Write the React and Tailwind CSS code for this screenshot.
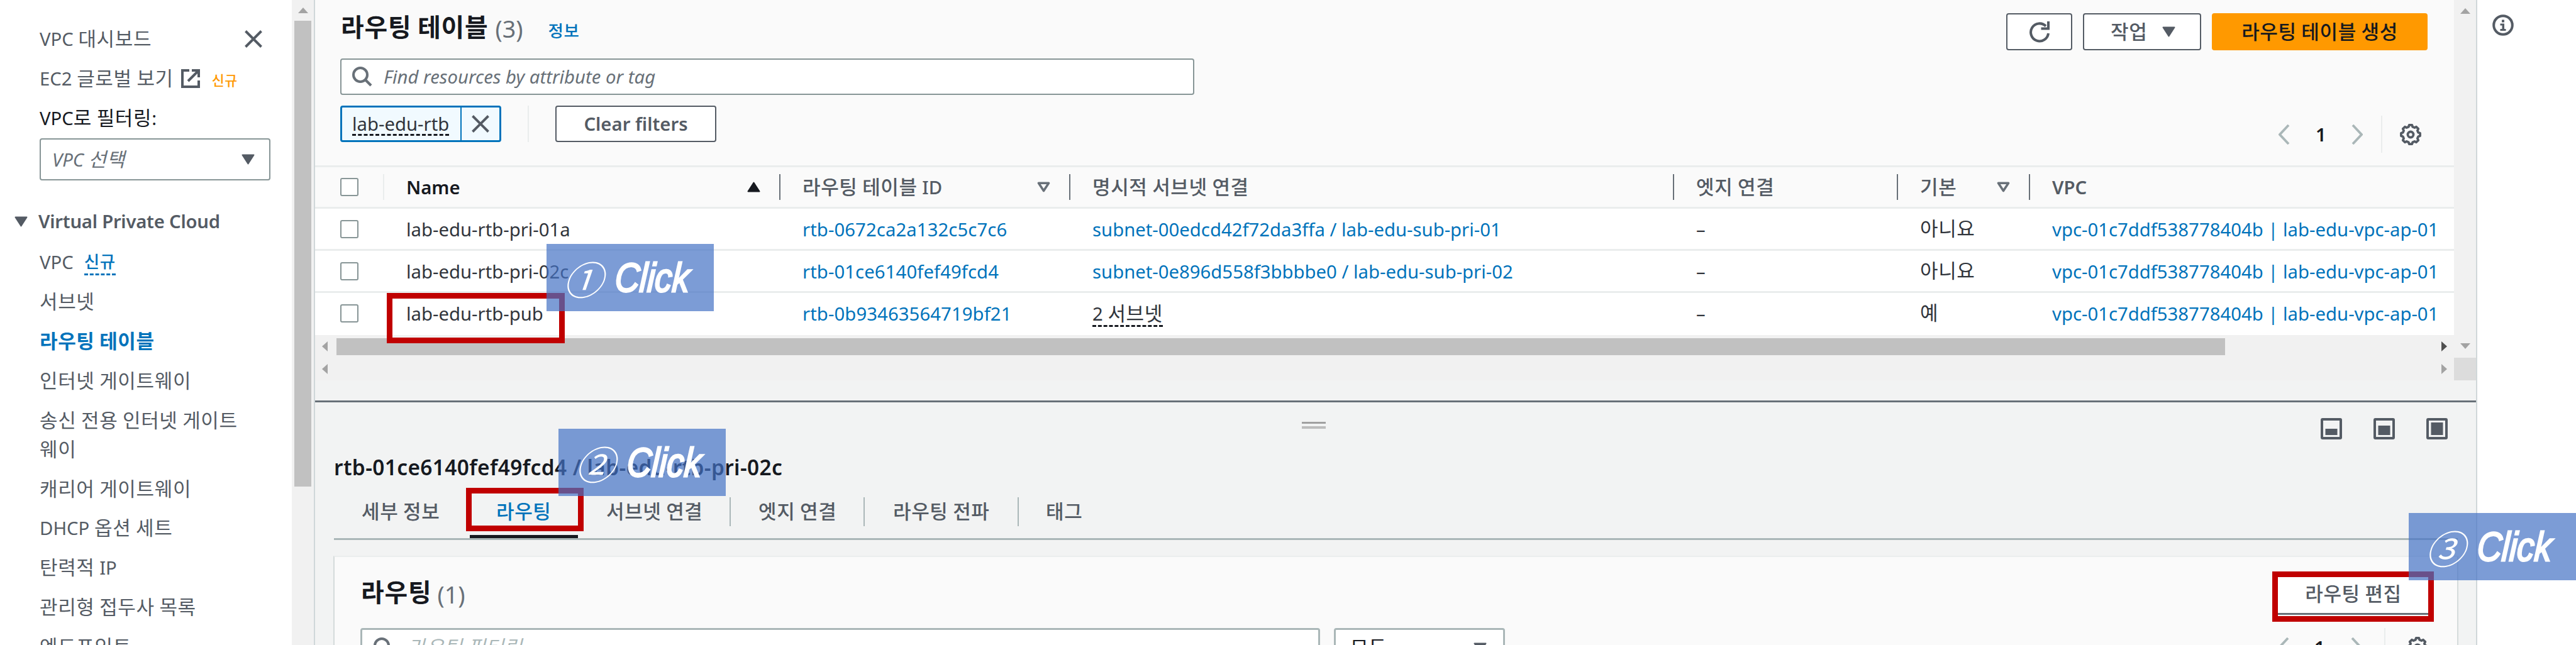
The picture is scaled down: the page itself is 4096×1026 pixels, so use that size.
import React from "react";

/* Splits a string so that Hangul runs get their own face and pitch. */
function T({ children }) {
  return String(children)
    .split(/([가-힣]+)/)
    .map((part, i) =>
      i % 2 ? (
        <span key={i} className="font-['Noto_Sans_CJK_KR',sans-serif] text-[1.06em] leading-none tracking-[0.02em]">
          {part}
        </span>
      ) : (
        part
      )
    );
}

const Down = ({ className = "", color = "#545b64" }) => (
  <svg viewBox="0 0 21 17" className={"h-[17px] w-[21px] shrink-0 " + className}>
    <path d="M1.5 1.5h18L10.5 15.5z" fill={color} stroke={color} strokeWidth="2" strokeLinejoin="round" />
  </svg>
);
const Up = ({ className = "" }) => (
  <svg viewBox="0 0 21 17" className={"h-[17px] w-[21px] shrink-0 " + className}>
    <path d="M1.5 15.5h18L10.5 1.5z" fill="#16191f" stroke="#16191f" strokeWidth="2" strokeLinejoin="round" />
  </svg>
);
const Hollow = ({ className = "" }) => (
  <svg viewBox="0 0 21 17" className={"h-[17px] w-[21px] shrink-0 " + className}>
    <path d="M2.5 2.2h16L10.5 14.6z" fill="none" stroke="#687078" strokeWidth="3.6" strokeLinejoin="round" />
  </svg>
);
const Cross = ({ className = "" }) => (
  <svg viewBox="0 0 28 28" className={"h-[28px] w-[28px] shrink-0 " + className}>
    <path d="M1.5 1.5l25 25M26.5 1.5l-25 25" stroke="#545b64" strokeWidth="4" fill="none" />
  </svg>
);
const Magnifier = ({ className = "" }) => (
  <svg viewBox="0 0 32 32" className={"h-[32px] w-[32px] shrink-0 " + className}>
    <circle cx="13" cy="13" r="11" stroke="#687078" strokeWidth="4" fill="none" />
    <path d="M20.5 20.5L30 30" stroke="#687078" strokeWidth="4.2" fill="none" />
  </svg>
);
const Chevron = ({ right, className = "" }) => (
  <svg viewBox="0 0 18 32" className={"h-[32px] w-[18px] shrink-0 " + className}>
    <path d={right ? "M2 1l14 15L2 31" : "M16 1L2 16l14 15"} stroke="#aab7b8" strokeWidth="3.8" fill="none" />
  </svg>
);

/* Eight-toothed cog outline. */
const COG = Array.from({ length: 8 }, (_, t) =>
  [[-15, 12.6], [-8.5, 15.2], [8.5, 15.2], [15, 12.6]]
    .map(([deg, r]) => {
      const a = ((t * 45 + deg) * Math.PI) / 180;
      return (18 + r * Math.sin(a)).toFixed(2) + "," + (18 - r * Math.cos(a)).toFixed(2);
    })
    .join(" ")
).join(" ");
const Gear = ({ className = "" }) => (
  <svg viewBox="0 0 36 36" className={"h-[36px] w-[36px] shrink-0 " + className}>
    <polygon points={COG} fill="none" stroke="#545b64" strokeWidth="3.8" strokeLinejoin="round" />
    <circle cx="18" cy="18" r="4.5" fill="none" stroke="#545b64" strokeWidth="3.8" />
  </svg>
);
const Tri = ({ dir, color = "#a3a3a3", className = "" }) => {
  const d = { up: "M0 12L8 3l8 9z", down: "M0 4h16L8 13z", left: "M12 0L3 8l9 8z", right: "M4 0l9 8-9 8z" }[dir];
  return (
    <svg viewBox="0 0 16 16" className={"h-[16px] w-[16px] shrink-0 " + className}>
      <path d={d} fill={color} />
    </svg>
  );
};

const Check = () => <div className="h-[29px] w-[29px] rounded-[3px] border-2 border-[#879596] bg-white" />;

const NAV = ["인터넷 게이트웨이", "송신 전용 인터넷 게이트\n웨이", "캐리어 게이트웨이", "DHCP 옵션 세트", "탄력적 IP", "관리형 접두사 목록", "엔드포인트"];

function Sidebar() {
  return (
    <aside className="flex h-full w-[499px] shrink-0 bg-white text-[#545b64]">
      <div className="flex w-[464px] shrink-0 flex-col pt-[39px] [&>*]:shrink-0">
        <div className="flex h-[46px] items-center justify-between pl-[63px] pr-[47px]">
          <span><T>VPC 대시보드</T></span>
          <Cross />
        </div>
        <div className="mt-[17px] flex h-[46px] items-center pl-[63px]">
          <span><T>EC2 글로벌 보기</T></span>
          <svg viewBox="0 0 30 30" className="ml-[12px] h-[30px] w-[30px]">
            <path d="M13 2H2v26h26V18M17 2h11v11M27 3L11 19" fill="none" stroke="#545b64" strokeWidth="4" />
          </svg>
          <span className="ml-[19px] mt-[5px] text-[20.500px] font-medium text-[#ff9900]"><T>신규</T></span>
        </div>
        <div className="mt-[17px] flex h-[46px] items-center pl-[63px] text-[#16191f]">
          <span><T>VPC로 필터링:</T></span>
        </div>
        <div className="ml-[63px] mt-[9px] flex h-[67px] w-[367px] items-center justify-between rounded-[4px] border-2 border-[#879596] bg-white pl-[18px] pr-[23px] text-[#687078]">
          <span className="italic"><T>VPC 선택</T></span>
          <Down />
        </div>
        <div className="mt-[42px] flex h-[46px] items-center pl-[23px] font-semibold">
          <Down />
          <span className="ml-[17px] tracking-[-0.250px]">Virtual Private Cloud</span>
        </div>
        <div className="mt-[19px] flex h-[46px] items-center pl-[63px]">
          <span>VPC</span>
          <span className="ml-[17px] mt-[4px] h-[38px] border-b-[3px] border-dashed border-[#0073bb] text-[25px] font-medium leading-[32px] text-[#0073bb]"><T>신규</T></span>
        </div>
        <div className="mt-[17px] flex h-[46px] items-center pl-[63px]"><span><T>서브넷</T></span></div>
        <div className="mt-[17px] flex h-[46px] items-center pl-[63px] font-bold text-[#0073bb]"><span><T>라우팅 테이블</T></span></div>
        {NAV.map((n) => (
          <div key={n} className="mt-[16.850px] whitespace-pre pl-[63px] leading-[46px]"><T>{n}</T></div>
        ))}
      </div>
      <div className="flex w-[35px] flex-col items-center bg-[#f1f1f1] pt-[9px]">
        <Tri dir="up" />
        <div className="mt-[8px] h-[741px] w-[27px] bg-[#c1c1c1]" />
      </div>
    </aside>
  );
}

const ROWS = [
  ["lab-edu-rtb-pri-01a", "rtb-0672ca2a132c5c7c6", "subnet-00edcd42f72da3ffa / lab-edu-sub-pri-01", "아니요"],
  ["lab-edu-rtb-pri-02c", "rtb-01ce6140fef49fcd4", "subnet-0e896d558f3bbbbe0 / lab-edu-sub-pri-02", "아니요"],
  ["lab-edu-rtb-pub", "rtb-0b93463564719bf21", null, "예"],
];

const GRID = "grid grid-cols-[110px_630px_461px_960px_356px_210px_674px] items-center";

function HeadCell({ children, icon, last }) {
  return (
    <div
      className={
        "flex h-[41px] items-center justify-between whitespace-nowrap pl-[35px] pr-[30px] " +
        (last ? "font-semibold" : "border-r-2 border-[#687078]")
      }
    >
      <span><T>{children}</T></span>
      {icon}
    </div>
  );
}

function RouteTables() {
  return (
    <section className="flex h-[605px] w-full bg-[#f1f1f1]">
      <div className="flex w-[3401px] shrink-0 flex-col overflow-hidden bg-[#fafafa]">
        <div className="flex h-[92px] shrink-0 items-start pl-[41px] pr-[42px]">
          <div className="flex h-[90px] items-center pb-[2px] text-[37.600px]">
            <span className="font-bold text-[#16191f]"><T>라우팅 테이블</T></span>
            <span className="ml-[11px] mt-[4px] text-[#687078]">(3)</span>
            <span className="ml-[40px] mt-[9px] text-[25px] font-medium text-[#0073bb]"><T>정보</T></span>
          </div>
          <div className="ml-auto mt-[21px] flex h-[59px] gap-[17px]">
            <div className="flex w-[105px] items-center justify-center rounded-[4px] border-2 border-[#545b64] bg-white">
              <svg viewBox="0 0 34 34" className="h-[34px] w-[34px]">
                <path d="M31 19A14 14 0 1 1 27 7.500" fill="none" stroke="#545b64" strokeWidth="4" />
                <path d="M31 0v11.500H19.500" fill="none" stroke="#545b64" strokeWidth="4" />
              </svg>
            </div>
            <div className="flex w-[188px] items-center rounded-[4px] border-2 border-[#545b64] bg-white pl-[42px] font-medium text-[#545b64]">
              <span className="w-[82px]"><T>작업</T></span>
              <Down />
            </div>
            <div className="flex w-[343px] items-center justify-center rounded-[4px] bg-[#ff9900] font-medium text-[#16191f]">
              <span><T>라우팅 테이블 생성</T></span>
            </div>
          </div>
        </div>
        <div className="ml-[40px] mt-[1px] flex h-[58px] w-[1358px] shrink-0 items-center rounded-[4px] border-2 border-[#879596] bg-white pl-[17px]">
          <Magnifier />
          <span className="ml-[18px] italic text-[#687078]">Find resources by attribute or tag</span>
        </div>
        <div className="mt-[17px] flex h-[98px] shrink-0 items-start border-b-[3px] border-[#eaeded] pl-[40px]">
          <div className="flex h-[58px] w-[256px] rounded-[4px] border-[3px] border-[#0073bb] bg-[#f1faff]">
            <div className="flex w-[190px] items-center border-r-2 border-[#0073bb] pl-[16px] text-[#30343b]">
              <span className="h-[38px] border-b-[3px] border-dashed border-[#16191f] leading-[38px]">lab-edu-rtb</span>
            </div>
            <div className="flex flex-1 items-center justify-center"><Cross /></div>
          </div>
          <div className="ml-[42px] h-[58px] w-[2px] bg-[#eaeded]" />
          <div className="ml-[42px] flex h-[58px] w-[256px] items-center justify-center rounded-[4px] border-2 border-[#545b64] bg-white font-semibold text-[#545b64]">
            <span>Clear filters</span>
          </div>
          <div className="ml-auto mr-[51px] mt-[16px] flex h-[59px] items-center">
            <Chevron />
            <span className="ml-[41px] mr-[41px] w-[16px] font-semibold text-[#16191f]">1</span>
            <Chevron right />
            <div className="ml-[29px] mr-[27px] h-[59px] w-[2px] bg-[#eaeded]" />
            <Gear />
          </div>
        </div>
        <div className={GRID + " h-[66px] shrink-0 border-b-[3px] border-[#eaeded] font-medium text-[#545b64]"}>
          <div className="flex h-[41px] items-center border-r-2 border-[#eaeded] pl-[40px]"><Check /></div>
          <div className="flex h-[41px] items-center justify-between border-r-2 border-[#687078] pl-[35px] pr-[30px] font-semibold text-[#16191f]">
            <span>Name</span>
            <Up />
          </div>
          <HeadCell icon={<Hollow />}>라우팅 테이블 ID</HeadCell>
          <HeadCell>명시적 서브넷 연결</HeadCell>
          <HeadCell>엣지 연결</HeadCell>
          <HeadCell icon={<Hollow />}>기본</HeadCell>
          <HeadCell last>VPC</HeadCell>
        </div>
        {ROWS.map((r, i) => (
          <div key={i} className={GRID + " h-[67px] shrink-0 whitespace-nowrap border-b-[3px] bg-white text-[#30343b] " + (i < 2 ? "border-[#eaeded]" : "border-white")}>
            <div className="pl-[40px]"><Check /></div>
            <div className="pl-[35px] pt-px">{r[0]}</div>
            <div className="pl-[35px] pt-px tracking-[0.080px] text-[#0073bb]">{r[1]}</div>
            <div className="pl-[35px] pt-px text-[#0073bb]">
              {r[2] || (
                <span className="block h-[42px] w-fit border-b-[3px] border-dashed border-[#16191f] leading-[42px] text-[#30343b]"><T>2 서브넷</T></span>
              )}
            </div>
            <div className="pl-[35px] pt-px">–</div>
            <div className="pl-[35px]"><T>{r[3]}</T></div>
            <div className="pl-[35px] pt-px text-[#0073bb]">vpc-01c7ddf538778404b | lab-edu-vpc-ap-01</div>
          </div>
        ))}
        <div className="flex h-[36px] shrink-0 items-center bg-[#f1f1f1] px-[8px]">
          <Tri dir="left" />
          <div className="ml-[10px] h-[27px] w-[3003px] bg-[#c1c1c1]" />
          <Tri dir="right" color="#505050" className="ml-auto" />
        </div>
        <div className="flex h-[36px] shrink-0 items-center justify-between bg-[#f1f1f1] px-[8px]">
          <Tri dir="left" />
          <Tri dir="right" />
        </div>
      </div>
      <div className="flex h-full w-[35px] flex-col items-center justify-between pt-[10px]">
        <Tri dir="up" />
        <div className="flex w-full flex-col items-center">
          <Tri dir="down" className="mb-[11px]" />
          <div className="h-[36px] w-full bg-[#dcdcdc]" />
        </div>
      </div>
    </section>
  );
}

const PanelIcon = ({ top }) => (
  <svg viewBox="0 0 34 34" className="h-[34px] w-[34px]">
    <rect x="2" y="2" width="30" height="30" rx="1" fill="none" stroke="#545b64" strokeWidth="4" />
    <rect x="7.500" y={top} width="19" height={27 - top} fill="#545b64" />
  </svg>
);

function Tab({ children, sep, active, className }) {
  return (
    <div className={"relative flex h-full items-start pt-[22px] " + className}>
      <span className={"whitespace-nowrap " + (active ? "text-[#0073bb]" : "text-[#545b64]")}><T>{children}</T></span>
      {sep && <div className="ml-auto h-[46px] w-[2px] bg-[#aab7b8]" />}
      {active && <div className="absolute bottom-0 left-0 h-[5px] w-full bg-[#16191f]" />}
    </div>
  );
}

function Details() {
  return (
    <section className="flex min-h-0 flex-1 flex-col bg-[#f2f3f3]">
      <div className="mt-[32px] h-[3px] w-full shrink-0 bg-[#687078]" />
      <div className="flex h-[75px] shrink-0 items-start">
        <div className="ml-[1569px] mt-[31px] flex w-[38px] flex-col gap-[4px]">
          <div className="h-[3px] bg-[#a0a0a0]" />
          <div className="h-[4px] bg-[#bdbdbd]" />
        </div>
        <div className="ml-auto mr-[45px] mt-[25px] flex gap-[50px]">
          <PanelIcon top={17} />
          <PanelIcon top={12} />
          <PanelIcon top={7} />
        </div>
      </div>
      <div className="h-[54px] shrink-0 pl-[30px] text-[33.400px] font-semibold leading-[57px] tracking-[0.400px] text-[#16191f]">
        <span>rtb-01ce6140fef49fcd4 / lab-edu-rtb-pri-02c</span>
      </div>
      <div className="ml-[30px] flex h-[90px] w-[3377px] shrink-0 border-b-[3px] border-[#aab7b8] font-medium">
        <Tab className="w-[216px] pl-[44px]">세부 정보</Tab>
        <Tab className="w-[172px] pl-[42px]" active>라우팅</Tab>
        <Tab className="w-[243px] pl-[45px]" sep>서브넷 연결</Tab>
        <Tab className="w-[213px] pl-[44px]" sep>엣지 연결</Tab>
        <Tab className="w-[245px] pl-[45px]" sep>라우팅 전파</Tab>
        <Tab className="w-[200px] pl-[43px]">태그</Tab>
      </div>
      <div className="ml-[29px] mt-[25px] flex h-[200px] w-[3379px] shrink-0 flex-col border-2 border-[#d5dbdb] border-t-[#eaeded] bg-[#fafafa]">
        <div className="flex h-[113px] shrink-0 items-center pl-[42px] pr-[39px] text-[37.600px]">
          <span className="font-bold text-[#16191f]"><T>라우팅</T></span>
          <span className="ml-[9px] mt-[6px] text-[#687078]">(1)</span>
          <div className="ml-auto mt-[5px] flex h-[66px] w-[252px] items-center justify-center rounded-[2px] border-2 border-b-[3px] border-[#687078] bg-white text-[29.300px] font-medium text-[#545b64]">
            <span><T>라우팅 편집</T></span>
          </div>
        </div>
        <div className="flex items-start pl-[41px]">
          <div className="flex h-[62px] w-[1526px] items-center rounded-[4px] border-[3px] border-[#aab7b8] bg-white pl-[18px]">
            <Magnifier />
            <span className="ml-[22px] italic text-[#aab7b8]"><T>라우팅 필터링</T></span>
          </div>
          <div className="ml-[22px] flex h-[62px] w-[272px] items-center justify-between rounded-[4px] border-[3px] border-[#aab7b8] bg-white pl-[23px] pr-[26px] text-[#16191f]">
            <span><T>모두</T></span>
            <Down />
          </div>
          <div className="ml-auto mr-[45px] flex h-[62px] items-center">
            <Chevron />
            <span className="mx-[40px] w-[18px] font-semibold text-[#16191f]">1</span>
            <Chevron right />
            <div className="ml-[35px] mr-[33px] h-[62px] w-[2px] bg-[#eaeded]" />
            <Gear />
          </div>
        </div>
      </div>
    </section>
  );
}

function ClickLabel({ n, className }) {
  return (
    <div className={"absolute flex w-[266px] items-center overflow-hidden bg-[#4472c4]/70 pl-[34px] text-white " + className}>
      <span className="w-[66px] -skew-x-[19deg] font-['Noto_Sans_CJK_KR',sans-serif] text-[62px] leading-none">{n}</span>
      <span className="ml-[9px] origin-left -skew-x-[4deg] scale-x-[0.840] font-['Liberation_Sans',sans-serif] text-[65px] italic leading-none [-webkit-text-stroke:2.800px_white]">Click</span>
    </div>
  );
}

export default function App() {
  return (
    <div className="relative flex h-[1026px] w-[4096px] overflow-hidden bg-white font-['Noto_Sans','Noto_Sans_CJK_KR',sans-serif] text-[29.300px] leading-[46px]">
      <Sidebar />
      <main className="flex w-[3440px] shrink-0 flex-col border-x-2 border-[#d0d7d9]">
        <RouteTables />
        <Details />
      </main>
      <div className="pl-[24px] pt-[23px]">
        <svg viewBox="0 0 34 34" className="h-[34px] w-[34px]">
          <circle cx="17" cy="17" r="14.800" fill="none" stroke="#545b64" strokeWidth="4" />
          <path d="M15 8.500h4v4h-4zM12.500 14.500h6.500v8.500h2.500v3h-9v-3H15.500v-5.500h-3z" fill="#545b64" />
        </svg>
      </div>

      <div className="absolute left-[615px] top-[466px] h-[80px] w-[283px] border-[9.500px] border-[#c00000]" />
      <div className="absolute left-[741px] top-[776px] h-[69px] w-[187px] border-[9.500px] border-[#c00000]" />
      <div className="absolute left-[3613px] top-[909px] h-[80px] w-[257px] border-[9.500px] border-[#c00000]" />
      <ClickLabel n="①" className="left-[869px] top-[388px] h-[107px]" />
      <ClickLabel n="②" className="left-[888px] top-[682px] h-[107px]" />
      <ClickLabel n="③" className="left-[3830px] top-[816px] h-[107px]" />
    </div>
  );
}
